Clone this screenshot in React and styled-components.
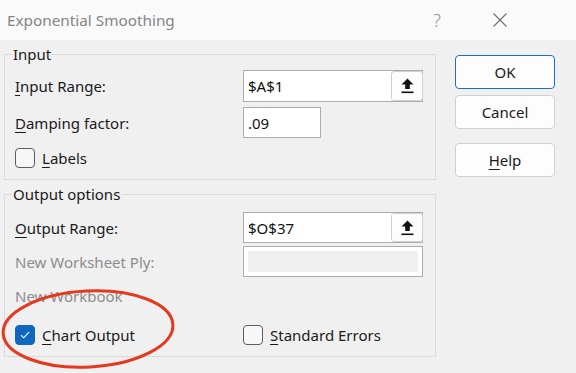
import React from 'react';
import styled, { createGlobalStyle } from 'styled-components';

const Global = createGlobalStyle`
  html, body { margin: 0; padding: 0; background: #f0f0f0; }
  body { font-family: "Noto Sans", "Open Sans", sans-serif; }
`;

const Dialog = styled.div`
  position: relative;
  width: 576px;
  height: 373px;
  overflow: hidden;
  background: #f0f0f0;
  color: #1a1a1a;
  font-size: 15px;
`;

const TitleBar = styled.div`
  height: 40px;
  display: flex;
  align-items: center;
  padding-left: 7px;
  padding-right: 69px;
  background: #fafafa;
`;

const Title = styled.div`
  flex: 1;
  font-size: 15.3px;
  color: #858585;
`;

const HelpGlyph = styled.span`
  font-size: 18px;
  font-weight: 300;
  color: #8f8f8f;
  margin-right: 52px;
`;

const Body = styled.div`
  display: flex;
  padding: 4px 0 0 4px;
`;

const LeftCol = styled.div`
  width: 432px;
  display: flex;
  flex-direction: column;
  gap: 4px;
`;

const RightCol = styled.div`
  display: flex;
  flex-direction: column;
  margin-left: 19px;
  padding-top: 11px;
  width: 100px;
`;

const Group = styled.fieldset`
  margin: 0;
  padding: 0;
  min-width: 0;
  border: 1px solid #dadada;
`;

const Legend = styled.legend`
  margin-left: 7px;
  padding: 0 1px;
  line-height: 20px;
  font-size: 15px;
  color: #1a1a1a;
`;

const GroupBody = styled.div`
  display: flex;
  flex-direction: column;
  padding: ${p => p.$pt}px 0 11px 10px;
`;

const Row = styled.div`
  display: grid;
  grid-template-columns: 228px auto;
  align-items: center;
  height: ${p => p.$h}px;
  margin-top: ${p => p.$mt || 0}px;
`;

const Label = styled.span`
  color: ${p => (p.$disabled ? '#8c8c8c' : '#1a1a1a')};
  line-height: 20px;
`;

const Key = styled.span`
  text-decoration: underline;
  text-underline-offset: 3px;
  text-decoration-thickness: 1px;
`;

const TextBox = styled.div`
  box-sizing: border-box;
  width: ${p => p.$w}px;
  height: ${p => p.$h}px;
  display: flex;
  align-items: center;
  background: #ffffff;
  border: 1px solid #acacac;
  padding: ${p => (p.$inset ? '4px' : '0 0 0 4px')};
`;

const BoxText = styled.span`
  flex: 1;
  color: #111;
`;

const DisabledFill = styled.div`
  flex: 1;
  align-self: stretch;
  background: #f0f0f0;
`;

const RefButton = styled.div`
  box-sizing: border-box;
  width: 32px;
  height: 100%;
  margin-right: -1px;
  display: flex;
  align-items: center;
  justify-content: center;
  background: #fdfdfd;
  border: 1px solid #d0d0d0;
  border-radius: 3px;
`;

const CheckWrap = styled.div`
  display: flex;
  align-items: center;
  gap: 7px;
`;

const Box = styled.div`
  box-sizing: border-box;
  width: 20px;
  height: 20px;
  border-radius: 4px;
  display: flex;
  align-items: center;
  justify-content: center;
  background: ${p => (p.$checked ? '#0f67bf' : '#f7f7f7')};
  border: 1px solid ${p => (p.$checked ? '#0f67bf' : '#5c5c5c')};
`;

const Button = styled.div`
  box-sizing: border-box;
  height: 34px;
  margin-top: ${p => p.$mt || 0}px;
  display: flex;
  align-items: center;
  justify-content: center;
  background: #fdfdfd;
  border: 1px solid ${p => (p.$primary ? '#1a6fc4' : '#d0d0d0')};
  border-radius: 4px;
  color: #1a1a1a;
`;

const Annotation = styled.svg`
  position: absolute;
  left: 0;
  top: 285px;
  pointer-events: none;
`;

const UploadIcon = () => (
  <svg width="13" height="16" viewBox="0 0 13 16">
    <polygon points="6.5,0.5 12.5,6.5 8.8,6.5 8.8,11 4.2,11 4.2,6.5 0.5,6.5" fill="#111" />
    <rect x="0.5" y="13.5" width="12" height="1.6" fill="#111" />
  </svg>
);

const RefBox = ({ value, h }) => (
  <TextBox $w={180} $h={h}>
    <BoxText>{value}</BoxText>
    <RefButton>
      <UploadIcon />
    </RefButton>
  </TextBox>
);

const Check = ({ checked, children }) => (
  <CheckWrap>
    <Box $checked={checked}>
      {checked && (
        <svg width="12" height="10" viewBox="0 0 12 10">
          <path d="M2 5.2 L4.7 7.8 L10 2.2" fill="none" stroke="#fff" strokeWidth="1.1" />
        </svg>
      )}
    </Box>
    <Label>{children}</Label>
  </CheckWrap>
);

export default function App() {
  return (
    <Dialog>
      <Global />
      <TitleBar>
        <Title>Exponential Smoothing</Title>
        <HelpGlyph>?</HelpGlyph>
        <svg width="14" height="14" viewBox="0 0 14 14">
          <path d="M0.5 0.5 L13.5 13.5 M13.5 0.5 L0.5 13.5" stroke="#6e6e6e" strokeWidth="1.1" />
        </svg>
      </TitleBar>
      <Body>
        <LeftCol>
          <Group>
            <Legend>Input</Legend>
            <GroupBody $pt={6}>
              <Row $h={32}>
                <Label><Key>I</Key>nput Range:</Label>
                <RefBox value="$A$1" h={32} />
              </Row>
              <Row $h={31} $mt={5}>
                <Label><Key>D</Key>amping factor:</Label>
                <TextBox $w={78} $h={31}>
                  <BoxText>.09</BoxText>
                </TextBox>
              </Row>
              <Row $h={20} $mt={10}>
                <Check><Key>L</Key>abels</Check>
              </Row>
            </GroupBody>
          </Group>
          <Group>
            <Legend>Output options</Legend>
            <GroupBody $pt={8}>
              <Row $h={31}>
                <Label><Key>O</Key>utput Range:</Label>
                <RefBox value="$O$37" h={31} />
              </Row>
              <Row $h={31} $mt={3}>
                <Label $disabled>New Worksheet Ply:</Label>
                <TextBox $w={180} $h={31} $inset>
                  <DisabledFill />
                </TextBox>
              </Row>
              <Row $h={20} $mt={9}>
                <Label $disabled>New Workbook</Label>
              </Row>
              <Row $h={20} $mt={19}>
                <Check checked><Key>C</Key>hart Output</Check>
                <Check><Key>S</Key>tandard Errors</Check>
              </Row>
            </GroupBody>
          </Group>
        </LeftCol>
        <RightCol>
          <Button $primary>OK</Button>
          <Button $mt={6}>Cancel</Button>
          <Button $mt={14}><span><Key>H</Key>elp</span></Button>
        </RightCol>
      </Body>
      <Annotation width="190" height="88" viewBox="0 0 190 88">
        <ellipse
          cx="88"
          cy="44"
          rx="85"
          ry="38"
          fill="none"
          stroke="#e5391f"
          strokeWidth="3"
          transform="rotate(-3 88 44)"
        />
      </Annotation>
    </Dialog>
  );
}
